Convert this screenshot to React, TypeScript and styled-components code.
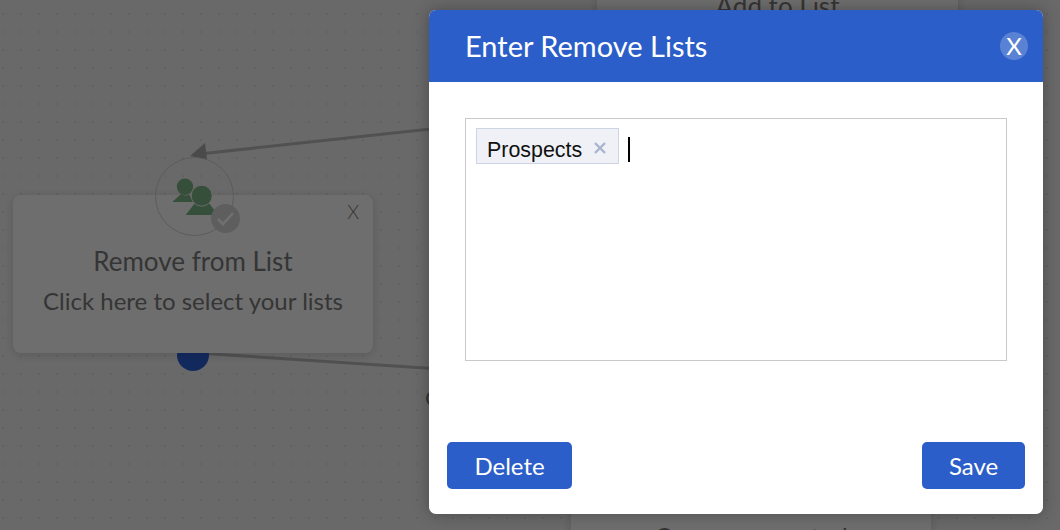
import React from 'react';
import styled, { createGlobalStyle } from 'styled-components';

const GlobalStyle = createGlobalStyle`
  html, body {
    margin: 0;
    padding: 0;
    height: 100%;
    overflow: hidden;
    font-family: Lato, "Liberation Sans", sans-serif;
  }
`;

// the flow chart behind the dialog, nodes sit at free positions
const Canvas = styled.div`
  position: relative;
  width: 1060px;
  height: 530px;
  overflow: hidden;
  background-color: #efefef;
  background-image: radial-gradient(circle, #e0e0e0 1px, transparent 1.4px);
  background-size: 18px 18px;
  background-position: -6px 5px;
`;

const Edges = styled.svg`
  position: absolute;
  left: 0;
  top: 0;
`;

const Card = styled.div<{ $x: number; $y: number; $w: number; $h: number }>`
  position: absolute;
  left: ${(p) => p.$x}px;
  top: ${(p) => p.$y}px;
  width: ${(p) => p.$w}px;
  height: ${(p) => p.$h}px;
  box-sizing: border-box;
  background: #fbfbfb;
  border-radius: 8px;
  box-shadow: 0 2px 10px rgba(0, 0, 0, 0.14);
  color: #7a7a7a;
  text-align: center;
`;

const CardTitle = styled.div`
  font-size: 26px;
  line-height: 30px;
`;

const ListCardBody = styled.div`
  padding-top: 51px;
`;

const CardHint = styled.div`
  font-size: 24px;
  line-height: 28px;
  margin-top: 11px;
`;

const CardClose = styled.span`
  position: absolute;
  top: 6px;
  right: 14px;
  font-size: 19px;
  line-height: 22px;
  font-weight: 300;
`;

const TopCardBody = styled.div`
  padding-top: 91px;
`;

const BottomCardBody = styled.div`
  padding-top: 18px;
`;

const Port = styled.div`
  position: absolute;
  left: 177px;
  top: 339px;
  width: 32px;
  height: 32px;
  border-radius: 50%;
  background: #2b5fd6;
`;

const IconRing = styled.div`
  position: absolute;
  left: 155px;
  top: 157px;
  width: 79px;
  height: 79px;
  box-sizing: border-box;
  border: 1px solid #d0d0d0;
  border-radius: 50%;
`;

const Badge = styled.div`
  position: absolute;
  left: 211px;
  top: 204px;
  width: 29px;
  height: 29px;
  display: flex;
  align-items: center;
  justify-content: center;
  border-radius: 50%;
  background: #d6d6d6;
`;

const StrayLetter = styled.span`
  position: absolute;
  left: 425px;
  top: 385px;
  font-size: 22px;
  line-height: 26px;
  color: #7a7a7a;
`;

const Overlay = styled.div`
  position: absolute;
  inset: 0;
  background: rgba(0, 0, 0, 0.56);
`;

const Modal = styled.div`
  position: absolute;
  left: 429px;
  top: 10px;
  width: 614px;
  height: 504px;
  display: flex;
  flex-direction: column;
  background: #fff;
  border-radius: 7px;
  overflow: hidden;
  box-shadow: 0 0 16px rgba(0, 0, 0, 0.3);
`;

const ModalHeader = styled.div`
  height: 72px;
  flex: none;
  display: flex;
  align-items: center;
  justify-content: space-between;
  padding: 0 15px 0 36px;
  background: #2b5ec8;
  color: #fff;
`;

const ModalTitle = styled.h2`
  margin: 0;
  font-size: 29px;
  font-weight: 400;
  line-height: 34px;
`;

const CloseButton = styled.button`
  width: 28px;
  height: 28px;
  padding: 0;
  border: 0;
  border-radius: 50%;
  background: rgba(255, 255, 255, 0.22);
  color: #fff;
  font-family: inherit;
  font-size: 24px;
  line-height: 28px;
`;

const ModalBody = styled.div`
  flex: 1;
  padding: 36px 36px 0;
`;

const TagBox = styled.div`
  height: 243px;
  box-sizing: border-box;
  display: flex;
  align-items: flex-start;
  gap: 9px;
  padding: 9px 10px;
  border: 1px solid #c9c9c9;
`;

const Tag = styled.div`
  height: 36px;
  box-sizing: border-box;
  display: flex;
  align-items: center;
  gap: 12px;
  padding: 8px 12px 0 10px;
  background: #f0f1f6;
  border: 1px solid #cdd5e5;
  color: #111;
  font-family: "Liberation Sans", Arial, sans-serif;
  font-size: 21.4px;
`;

const TagRemove = styled.span`
  display: flex;
  margin-bottom: 4px;
  color: #a9b4cf;
`;

const Caret = styled.div`
  width: 2px;
  height: 25px;
  margin-top: 9px;
  background: #000;
`;

const ModalFooter = styled.div`
  flex: none;
  display: flex;
  justify-content: space-between;
  padding: 0 18px 25px;
`;

const FooterButton = styled.button<{ $w: number }>`
  width: ${(p) => p.$w}px;
  height: 47px;
  padding: 0;
  border: 0;
  border-radius: 5px;
  background: #2b5ec8;
  color: #fff;
  font-family: inherit;
  font-size: 24px;
`;

function PeopleIcon() {
  return (
    <svg width="77" height="77" viewBox="0 0 77 77">
      <path d="M16.3 44 L25 36 Q29 38.5 33 36.5 L38 44 Z" fill="#7ab486" />
      <circle cx="29" cy="28.7" r="8.2" fill="#7ab486" />
      <path d="M29.7 57 L39 45 Q46 49 53 45 L62 57 Z" fill="#7ab486" />
      <circle cx="45.7" cy="37.7" r="10.5" fill="#7ab486" stroke="#f4f4f4" strokeWidth="1" />
    </svg>
  );
}

export default function App() {
  return (
    <>
      <GlobalStyle />
      <Canvas>
        <Edges width="1060" height="530">
          <line x1="440" y1="128" x2="204" y2="153.5" stroke="#b8b8b8" strokeWidth="3" />
          <line x1="205" y1="353.5" x2="440" y2="369" stroke="#b8b8b8" strokeWidth="3" />
        </Edges>

        <Card $x={597} $y={-100} $w={361} $h={170}>
          <TopCardBody>
            <CardTitle>Add to List</CardTitle>
          </TopCardBody>
        </Card>
        <Card $x={571} $y={505} $w={360} $h={120}>
          <BottomCardBody>
            <CardTitle>Coupons created</CardTitle>
          </BottomCardBody>
        </Card>

        <Port />
        <Card $x={13} $y={195} $w={360} $h={158}>
          <ListCardBody>
            <CardTitle>Remove from List</CardTitle>
            <CardHint>Click here to select your lists</CardHint>
          </ListCardBody>
          <CardClose>X</CardClose>
        </Card>
        <IconRing>
          <PeopleIcon />
        </IconRing>
        <Edges width="1060" height="530">
          <path d="M190 156 L205 143 L207 159 Z" fill="#a8a8a8" />
        </Edges>
        <Badge>
          <svg width="19" height="17" viewBox="0 0 19 17">
            <path d="M2 9 L7 14 L17 3" fill="none" stroke="#fff" strokeWidth="2.6" />
          </svg>
        </Badge>
        <StrayLetter>C</StrayLetter>

        <Overlay />

        <Modal>
          <ModalHeader>
            <ModalTitle>Enter Remove Lists</ModalTitle>
            <CloseButton>X</CloseButton>
          </ModalHeader>
          <ModalBody>
            <TagBox>
              <Tag>
                Prospects
                <TagRemove>
                  <svg width="12" height="12" viewBox="0 0 12 12">
                    <path d="M1 1 L11 11 M11 1 L1 11" stroke="currentColor" strokeWidth="2.4" />
                  </svg>
                </TagRemove>
              </Tag>
              <Caret />
            </TagBox>
          </ModalBody>
          <ModalFooter>
            <FooterButton $w={125}>Delete</FooterButton>
            <FooterButton $w={103}>Save</FooterButton>
          </ModalFooter>
        </Modal>
      </Canvas>
    </>
  );
}
